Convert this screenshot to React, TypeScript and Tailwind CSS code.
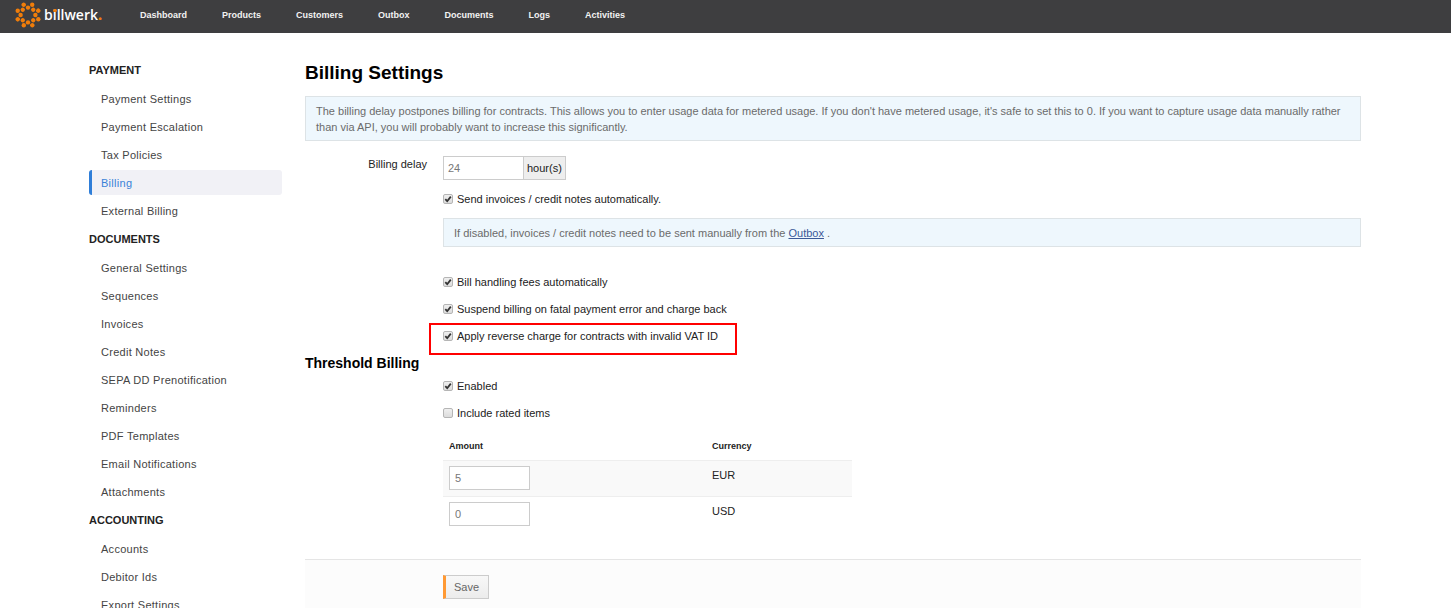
import type { ReactNode } from "react";

const nav = [
  "Dashboard",
  "Products",
  "Customers",
  "Outbox",
  "Documents",
  "Logs",
  "Activities",
];

const sections = [
  {
    title: "PAYMENT",
    items: [
      "Payment Settings",
      "Payment Escalation",
      "Tax Policies",
      "Billing",
      "External Billing",
    ],
  },
  {
    title: "DOCUMENTS",
    items: [
      "General Settings",
      "Sequences",
      "Invoices",
      "Credit Notes",
      "SEPA DD Prenotification",
      "Reminders",
      "PDF Templates",
      "Email Notifications",
      "Attachments",
    ],
  },
  {
    title: "ACCOUNTING",
    items: ["Accounts", "Debitor Ids", "Export Settings"],
  },
];

const thresholds = [
  { amount: "5", currency: "EUR" },
  { amount: "0", currency: "USD" },
];

export default function App() {
  return (
    <div className="h-screen bg-white pb-[5px] font-['Liberation_Sans',Arial,sans-serif] text-[11px] leading-4 text-[#222]">
      <div className="h-full overflow-hidden">
        <Header />

        <div className="flex items-start gap-[23px] pr-[90px] pl-[89px]">
          <Sidebar />
          <BillingSettings />
        </div>
      </div>
    </div>
  );
}

function Header() {
  return (
    <header className="flex h-[33px] items-center bg-[#3e3e40] pb-1 pl-[15px]">
      <a href="#" className="flex w-[125px] shrink-0 items-center gap-[3px]">
        <LogoMark />
        <span className="font-['Open_Sans',sans-serif] text-[14px] leading-5 font-semibold text-white">
          b
          <span className="relative">
            i
            <span className="absolute top-[4px] left-0 h-[3px] w-1 rounded-full bg-[#f07d0a]" />
          </span>
          llwerk<span className="font-extrabold text-[#f07d0a]">.</span>
        </span>
      </a>

      <nav className="flex gap-[35px]">
        {nav.map((item) => (
          <a key={item} href="#" className="text-[9px] font-bold text-[#f2f2f2]">
            {item}
          </a>
        ))}
      </nav>
    </header>
  );
}

function LogoMark() {
  const dots = [0, 1, 2, 3, 4, 5, 6, 7];

  return (
    <svg viewBox="-13 -13 26 26" className="h-[26px] w-[26px]" fill="#f07d0a">
      {dots.map((i) => (
        <g key={i} transform={`rotate(${i * 45})`}>
          <circle cx="0" cy="-7.4" r="2.2" />
          <circle cx="4.2" cy="-10.3" r="2.2" />
        </g>
      ))}
    </svg>
  );
}

function Sidebar() {
  return (
    <aside className="w-[193px] shrink-0 pt-[21px]">
      {sections.map((section) => (
        <section key={section.title}>
          <h3 className="flex h-8 items-center font-bold">{section.title}</h3>
          <ul className="flex flex-col gap-[3px]">
            {section.items.map((item) => (
              <li key={item}>
                <a
                  href="#"
                  className={
                    item === "Billing"
                      ? "flex h-[25px] items-center rounded-[3px] border-l-3 border-[#2f7ed8] bg-[#f1f1f6] pl-[9px] tracking-wide text-[#3a82d8]"
                      : "flex h-[25px] items-center border-l-3 border-transparent pl-[9px] tracking-wide text-[#444]"
                  }
                >
                  {item}
                </a>
              </li>
            ))}
          </ul>
        </section>
      ))}
    </aside>
  );
}

function BillingSettings() {
  return (
    <main className="min-w-0 flex-1 pt-7">
      <h1 className="mb-[11px] text-[19px] leading-6 font-bold text-black">
        Billing Settings
      </h1>
      <Info>
        The billing delay postpones billing for contracts. This allows you to
        enter usage data for metered usage. If you don't have metered usage,
        it's safe to set this to 0. If you want to capture usage data manually
        rather than via API, you will probably want to increase this
        significantly.
      </Info>

      <form>
        <div className="mt-[15px] flex">
          <label htmlFor="delay" className="w-[138px] pr-4 text-right">
            Billing delay
          </label>
          <input
            id="delay"
            defaultValue="24"
            className="h-6 w-[81px] border border-[#ccc] bg-white px-1 text-[#777]"
          />
          <span className="-ml-px flex h-6 items-center border border-[#ccc] bg-[#eee] px-[3px]">
            hour(s)
          </span>
        </div>

        <div className="mt-[11px] ml-[138px]">
          <Checkbox label="Send invoices / credit notes automatically." checked />
          <div className="mt-[11px] mb-[27px]">
            <Info>
              If disabled, invoices / credit notes need to be sent manually from
              the{" "}
              <a href="#" className="text-[#3b5998] underline">
                Outbox
              </a>{" "}
              .
            </Info>
          </div>
          <div className="flex flex-col gap-[11px]">
            <Checkbox label="Bill handling fees automatically" checked />
            <Checkbox
              label="Suspend billing on fatal payment error and charge back"
              checked
            />
            <div className="relative">
              <Checkbox
                label="Apply reverse charge for contracts with invalid VAT ID"
                checked
              />
              <div className="pointer-events-none absolute -top-[5px] -left-[14px] h-8 w-[308px] border-2 border-[#ff0000]" />
            </div>
          </div>
        </div>

        <h2 className="mt-[11px] mb-[7px] text-[14px] leading-4 font-bold text-black">
          Threshold Billing
        </h2>

        <div className="ml-[138px]">
          <div className="flex flex-col gap-[11px]">
            <Checkbox label="Enabled" checked />
            <Checkbox label="Include rated items" />
          </div>

          <table className="mt-3 w-[409px] table-fixed text-left">
            <thead>
              <tr className="h-[27px] text-[9px]">
                <th className="w-[263px] px-1.5 font-bold">Amount</th>
                <th className="px-1.5 font-bold">Currency</th>
              </tr>
            </thead>
            <tbody>
              {thresholds.map(({ amount, currency }) => (
                <tr
                  key={currency}
                  className="h-9 border-[#eee] odd:border-y odd:bg-[#f9f9f9]"
                >
                  <td className="px-1.5">
                    <input
                      aria-label={`Amount ${currency}`}
                      defaultValue={amount}
                      className="block h-6 w-[81px] border border-[#ccc] bg-white px-[5px] text-[#777]"
                    />
                  </td>
                  <td className="px-1.5 pt-1.5 align-top">{currency}</td>
                </tr>
              ))}
            </tbody>
          </table>
        </div>

        <div className="mt-[27px] border-t border-[#e5e5e5] bg-[#fcfcfc] py-[15px] pl-[138px]">
          <button
            type="submit"
            className="h-6 border border-l-3 border-[#ccc] border-l-[#ff9933] bg-linear-to-b from-[#f8f8f8] to-[#ececec] pr-[9px] pl-2 text-[#666]"
          >
            Save
          </button>
        </div>
      </form>
    </main>
  );
}

function Info({ children }: { children: ReactNode }) {
  return (
    <p className="border border-[#dde3e6] bg-[#eef7fd] px-2.5 pt-1.5 pb-[5px] text-[#6b6b6b]">
      {children}
    </p>
  );
}

function Checkbox({ label, checked }: { label: string; checked?: boolean }) {
  return (
    <label className="flex w-fit items-center gap-1">
      <span className="grid h-[10px] w-[10px] place-items-center">
        <input
          type="checkbox"
          defaultChecked={checked}
          className="peer col-start-1 row-start-1 h-[10px] w-[10px] appearance-none rounded-[2px] border border-[#b5b5b5] bg-linear-to-b from-[#efefef] to-[#dcdcdc]"
        />
        <svg
          viewBox="0 0 10 10"
          className="pointer-events-none invisible col-start-1 row-start-1 h-[10px] w-[10px] peer-checked:visible"
          fill="none"
          stroke="#333"
          strokeWidth="1.8"
        >
          <path d="M2.3 5.2 L4.2 7.2 L7.8 2.6" />
        </svg>
      </span>
      {label}
    </label>
  );
}
